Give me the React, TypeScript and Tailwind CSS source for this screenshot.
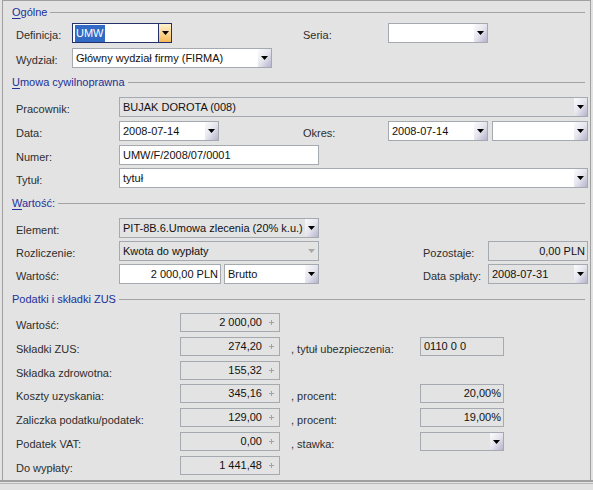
import clsx from 'clsx';
import type { ReactNode } from 'react';

type Tone = 'normal' | 'focus' | 'off';

const Header = ({ ul, rest, className }: { ul?: string; rest: string; className?: string }) => (
    <div className={clsx('flex h-[14px] items-center pl-[9px] pr-[5px]', className)}>
        <span className="leading-[14px] text-[#21309a]">
            {ul && <span className="underline underline-offset-2">{ul}</span>}
            {rest}
        </span>
        <div className="ml-[3px] h-px flex-1 bg-[#a3a3a3]" />
    </div>
);

const Label = ({ children, className }: { children: ReactNode; className?: string }) => (
    <span className={clsx('mt-[4px] shrink-0 whitespace-nowrap leading-[14px] text-[#2e2e2e]', className)}>{children}</span>
);

const Arrow = ({ tone = 'normal' }: { tone?: Tone }) => (
    <div
        className={clsx(
            'flex w-[13px] shrink-0 items-center justify-center',
            tone === 'focus' && 'border-l border-[#26306b] bg-linear-to-b from-[#fff3cf] to-[#f5b955]',
            tone === 'normal' && 'bg-linear-to-br from-[#fbfbfd] via-[#e6e5ee] to-[#b5b3cc]'
        )}
    >
        <svg width="7" height="4" viewBox="0 0 7 4">
            <path d="M0 0H7L3.5 4Z" fill={tone === 'off' ? '#a8a8a8' : '#000'} />
        </svg>
    </div>
);

const Plus = () => (
    <div className="flex w-[15px] shrink-0 items-center justify-center">
        <svg width="5" height="5" viewBox="0 0 5 5">
            <path d="M2 0h1v5H2zM0 2h5v1H0z" fill="#a3a3a3" />
        </svg>
    </div>
);

const Field = ({
    w,
    h = 'h-[20px]',
    gray,
    right,
    arrow,
    focus,
    plus,
    children,
}: {
    w: string;
    h?: string;
    gray?: boolean;
    right?: boolean;
    arrow?: Tone;
    focus?: boolean;
    plus?: boolean;
    children?: ReactNode;
}) => (
    <div
        className={clsx(
            'flex shrink-0 border',
            w,
            h,
            focus ? 'border-[#26306b]' : 'border-[#a5a9b0]',
            gray ? 'bg-[#e3e3e3]' : 'bg-white'
        )}
    >
        <div
            className={clsx(
                'flex min-w-0 flex-1 items-center overflow-hidden whitespace-nowrap text-[#111]',
                right ? 'justify-end pr-[2px]' : 'pl-[3px]'
            )}
        >
            {children}
        </div>
        {plus && <Plus />}
        {arrow && <Arrow tone={arrow} />}
    </div>
);

const TaxRow = ({ label, value, className, children }: { label: string; value: string; className?: string; children?: ReactNode }) => (
    <div className={clsx('flex items-center pl-[13px]', className)}>
        <Label className="w-[164px]">{label}</Label>
        <Field w="w-[100px]" h="h-[19px]" gray right plus>
            {value}
        </Field>
        {children}
    </div>
);

export default function App() {
    return (
        <div className="h-[490px] w-[593px] overflow-hidden bg-[#e3e3e3] font-['Liberation_Sans',Arial,sans-serif] text-[11px]">
            <div className="ml-[2px] w-[589px] border-l border-r border-t border-[#a0a0a0] pt-[4px]">
                {/* Ogólne */}
                <Header ul="O" rest="gólne" />
                <div className="mt-[4px] flex items-center pl-[13px]">
                    <Label className="w-[56px]">Definicja:</Label>
                    <Field w="w-[100px]" focus arrow="focus">
                        <span className="-ml-[1px] flex h-[17px] items-center bg-[#316ac5] px-[1px] text-white">UMW</span>
                    </Field>
                    <Label className="ml-[131px] w-[85px]">Seria:</Label>
                    <Field w="w-[100px]" arrow="normal" />
                </div>
                <div className="mt-[5px] flex items-center pl-[13px]">
                    <Label className="w-[56px]">Wydział:</Label>
                    <Field w="w-[200px]" arrow="normal">
                        Główny wydział firmy (FIRMA)
                    </Field>
                </div>

                {/* Umowa cywilnoprawna */}
                <Header ul="U" rest="mowa cywilnoprawna" className="mt-[7px]" />
                <div className="mt-[8px] flex items-center pl-[13px]">
                    <Label className="w-[103px]">Pracownik:</Label>
                    <Field w="w-[469px]" gray arrow="normal">
                        BUJAK DOROTA (008)
                    </Field>
                </div>
                <div className="mt-[4px] flex items-center pl-[13px]">
                    <Label className="w-[103px]">Data:</Label>
                    <Field w="w-[100px]" arrow="normal">
                        2008-07-14
                    </Field>
                    <Label className="ml-[84px] w-[85px]">Okres:</Label>
                    <Field w="w-[100px]" arrow="normal">
                        2008-07-14
                    </Field>
                    <div className="ml-[4px]">
                        <Field w="w-[96px]" arrow="normal" />
                    </div>
                </div>
                <div className="mt-[4px] flex items-center pl-[13px]">
                    <Label className="w-[103px]">Numer:</Label>
                    <Field w="w-[200px]">UMW/F/2008/07/0001</Field>
                </div>
                <div className="mt-[3px] flex items-center pl-[13px]">
                    <Label className="w-[103px]">Tytuł:</Label>
                    <Field w="w-[469px]" arrow="normal">
                        tytuł
                    </Field>
                </div>

                {/* Wartość */}
                <Header ul="W" rest="artość:" className="mt-[8px]" />
                <div className="mt-[8px] flex items-center pl-[13px]">
                    <Label className="w-[103px]">Element:</Label>
                    <Field w="w-[200px]" gray arrow="normal">
                        PIT-8B.6.Umowa zlecenia (20% k.u.)
                    </Field>
                </div>
                <div className="mt-[3px] flex items-center pl-[13px]">
                    <Label className="w-[103px]">Rozliczenie:</Label>
                    <Field w="w-[200px]" gray arrow="off">
                        Kwota do wypłaty
                    </Field>
                    <Label className="ml-[104px] w-[65px]">Pozostaje:</Label>
                    <Field w="w-[100px]" gray right>
                        0,00 PLN
                    </Field>
                </div>
                <div className="mt-[3px] flex items-center pl-[13px]">
                    <Label className="w-[103px]">Wartość:</Label>
                    <Field w="w-[102px]" right>
                        2 000,00 PLN
                    </Field>
                    <div className="ml-[3px]">
                        <Field w="w-[95px]" arrow="normal">
                            Brutto
                        </Field>
                    </div>
                    <Label className="ml-[104px] w-[65px]">Data spłaty:</Label>
                    <Field w="w-[100px]" gray arrow="normal">
                        2008-07-31
                    </Field>
                </div>

                {/* Podatki i składki ZUS */}
                <Header rest="Podatki i składki ZUS" className="mt-[8px]" />
                <TaxRow label="Wartość:" value="2 000,00" className="mt-[7px]" />
                <TaxRow label="Składki ZUS:" value="274,20" className="mt-[5px]">
                    <Label className="ml-[11px] w-[129px]">, tytuł ubezpieczenia:</Label>
                    <Field w="w-[84px]" h="h-[19px]" gray>
                        0110 0 0
                    </Field>
                </TaxRow>
                <TaxRow label="Składka zdrowotna:" value="155,32" className="mt-[5px]" />
                <TaxRow label="Koszty uzyskania:" value="345,16" className="mt-[4px]">
                    <Label className="ml-[11px] w-[129px]">, procent:</Label>
                    <Field w="w-[84px]" h="h-[19px]" gray right>
                        20,00%
                    </Field>
                </TaxRow>
                <TaxRow label="Zaliczka podatku/podatek:" value="129,00" className="mt-[5px]">
                    <Label className="ml-[11px] w-[129px]">, procent:</Label>
                    <Field w="w-[84px]" h="h-[19px]" gray right>
                        19,00%
                    </Field>
                </TaxRow>
                <TaxRow label="Podatek VAT:" value="0,00" className="mt-[5px]">
                    <Label className="ml-[11px] w-[129px]">, stawka:</Label>
                    <Field w="w-[84px]" h="h-[19px]" gray arrow="normal" />
                </TaxRow>
                <TaxRow label="Do wypłaty:" value="1 441,48" className="mt-[5px]" />
                <div className="h-[5px]" />
            </div>
            <div className="h-[2px] bg-[#a0a0a0]" />
            <div className="mt-[1px] h-px bg-[#b9b9b9]" />
        </div>
    );
}
